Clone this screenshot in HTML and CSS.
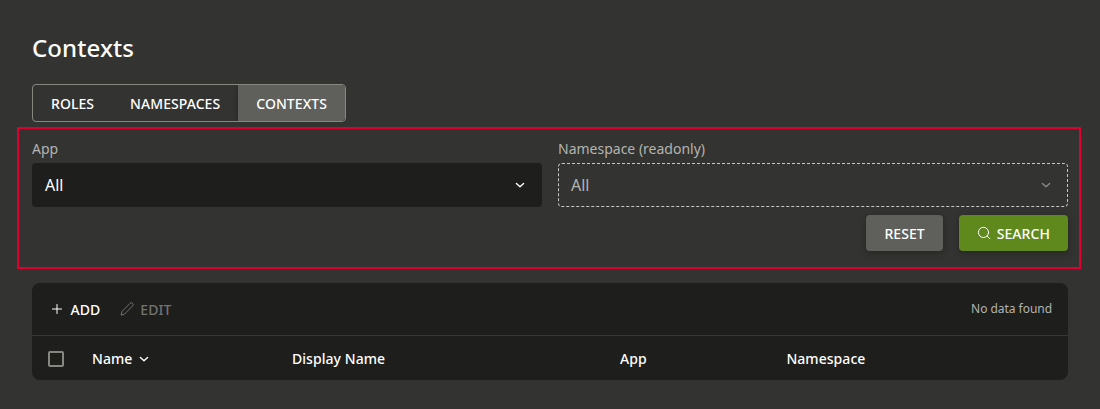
FILE: index.html
```html
<!DOCTYPE html>
<html lang="en">
<head>
<meta charset="utf-8">
<title>Contexts</title>
<link rel="stylesheet" href="styles.css">
</head>
<body>
<main class="page">
  <h1 class="title">Contexts</h1>
  <nav class="tabs">
    <a class="tab">ROLES</a>
    <a class="tab">NAMESPACES</a>
    <a class="tab tab-active">CONTEXTS</a>
  </nav>
  <section class="filters">
    <div class="fields">
      <div class="field">
        <label class="label">App</label>
        <div class="select"><span>All</span>
          <svg class="chevron" viewBox="0 0 16 16"><path d="M4.4 6.4L8 9.8l3.6-3.4"/></svg>
        </div>
      </div>
      <div class="field">
        <label class="label">Namespace (readonly)</label>
        <div class="select select-readonly"><span>All</span>
          <svg class="chevron" viewBox="0 0 16 16"><path d="M4.4 6.4L8 9.8l3.6-3.4"/></svg>
        </div>
      </div>
    </div>
    <div class="actions">
      <button class="button">RESET</button>
      <button class="button button-primary">
        <svg class="search-icon" viewBox="0 0 14 14"><circle cx="6.5" cy="6.4" r="5.1"/><path d="M10.2 10.1l2.5 2.5"/></svg>
        <span>SEARCH</span>
      </button>
    </div>
  </section>
  <section class="table">
    <div class="toolbar">
      <button class="tool">
        <svg class="tool-icon" viewBox="0 0 14 14"><path d="M7 2.5v9M2.5 7h9"/></svg><span>ADD</span>
      </button>
      <button class="tool tool-disabled">
        <svg class="tool-icon" viewBox="0 0 14 14"><path d="M1.2 12.8l.9-3.5 7.9-7.9a1.8 1.8 0 0 1 2.6 2.6l-7.9 7.9z"/></svg><span>EDIT</span>
      </button>
      <span class="status">No data found</span>
    </div>
    <div class="header">
      <span class="checkbox"></span>
      <span class="cell">Name<svg class="chevron" viewBox="0 0 16 16"><path d="M4.4 6.4L8 9.8l3.6-3.4"/></svg></span>
      <span class="cell">Display Name</span>
      <span class="cell">App</span>
      <span class="cell">Namespace</span>
    </div>
  </section>
</main>
</body>
</html>
```
FILE: styles.css
```css
* { box-sizing: border-box; }
body {
  margin: 0;
  background: #333331;
  color: #fff;
  font: 14px/20px "Noto Sans", sans-serif;
}
svg {
  display: block;
  flex: none;
  fill: none;
  stroke: currentColor;
  stroke-linecap: round;
  stroke-linejoin: round;
}
button {
  border: 0;
  padding: 0;
  background: none;
  color: inherit;
  font: inherit;
  font-weight: 500;
  letter-spacing: .06px;
}
.page { height: 409px; padding: 32px 32px 0; }
.title {
  margin: 0 0 20px;
  font-size: 24px;
  line-height: 32px;
  font-weight: 500;
  letter-spacing: .1px;
}
.tabs {
  display: flex;
  width: 314px;
  height: 38px;
  border: 1px solid #868880;
  border-radius: 4px;
  overflow: hidden;
}
.tab {
  display: flex;
  align-items: center;
  padding: 2px 18px 0;
  font-weight: 500;
  letter-spacing: .06px;
}
.tab-active { flex: 1; background: #5f605b; box-shadow: 0 2px 6px rgba(0, 0, 0, .3); }
.filters {
  height: 142px;
  margin: 5px -13px 0 -15px;
  padding: 10px 11px 0 13px;
  border: 2px solid #df0030;
}
.fields { display: grid; grid-template-columns: 1fr 1fr; gap: 16px; }
.label { display: block; height: 24px; color: #b3b3b0; }
.select {
  display: flex;
  align-items: center;
  justify-content: space-between;
  height: 44px;
  padding: 0 14px 0 13px;
  border-radius: 4px;
  background: #1e1e1c;
  font-size: 16px;
}
.select-readonly {
  padding: 0 13px 0 12px;
  border: 1px dashed #c8c8c5;
  background: none;
  color: #b3b3b0;
}
.chevron { width: 16px; height: 16px; stroke-width: 1.4; }
.select-readonly .chevron { color: #8b8b87; }
.actions { display: flex; justify-content: flex-end; gap: 16px; margin-top: 8px; }
.button {
  display: flex;
  align-items: center;
  gap: 6px;
  height: 36px;
  padding: 2px 18px 0;
  border-radius: 4px;
  background: #5f605b;
  box-shadow: 0 2px 6px rgba(0, 0, 0, .3);
}
.button-primary { background: #5f891d; }
.search-icon { width: 14px; height: 14px; margin-top: -2px; }
.table {
  height: 97px;
  margin-top: 14px;
  border-radius: 8px;
  background: #1e1e1c;
}
.toolbar {
  display: flex;
  align-items: center;
  height: 53px;
  padding: 0 16px 0 18px;
  border-bottom: 1px solid #383836;
}
.tool { display: flex; align-items: center; gap: 6.5px; margin-right: 19.5px; padding-top: 2px; }
.tool-icon { width: 14px; height: 14px; margin-top: -2px; }
.tool-disabled { color: #737370; }
.status { margin-left: auto; color: #b3b3b0; font-size: 12px; letter-spacing: -.04px; }
.header {
  display: grid;
  grid-template-columns: 44px 200px 328px 166.4px 1fr;
  align-items: center;
  height: 44px;
  padding: 1px 16px 0;
  font-weight: 500;
  letter-spacing: .05px;
}
.checkbox { width: 16px; height: 16px; border: 2px solid #868880; border-radius: 2px; margin-top: 1px; }
.cell { display: flex; align-items: center; gap: 4px; }
```
